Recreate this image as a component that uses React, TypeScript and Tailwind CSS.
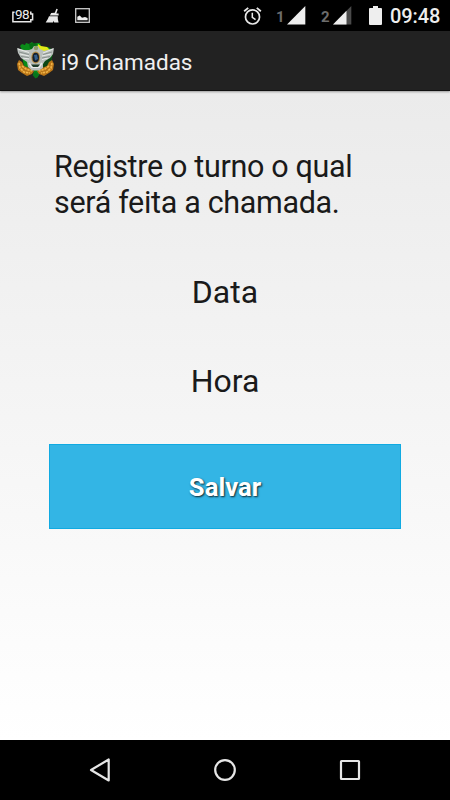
import React from "react";

function Emblem() {
  return (
    <svg width="40" height="38" viewBox="0 0 40 38" className="shrink-0">
      {/* Map */}
      <path
        d="M4 4L6 2L9 3L10 1L13 2L16 0L18 2L21 1L24 1L25 5L32 5L37 8L36 15L34 22L30 27L24 31L21 36L17 33L18 28L8 24L6 15L6 8Z"
        fill="#0a8a18"
      />
      <path d="M22 2L25 4L31 5L34 8L28 12L21 8Z" fill="#e2ea16" />
      <path d="M13 2L17 1L21 2L19 6L14 7Z" fill="#056b14" />
      <path d="M28 18L33 14L36 15L34 22L30 28L26 27Z" fill="#0b4715" />
      {/* Laurels */}
      <path
        d="M3 18L6 20L8 24L13 26L18 29L16 32L11 34L6 31L2 28L1 22Z"
        fill="#b97518"
      />
      <path
        d="M36 18L33 20L31 24L26 26L21 29L23 32L28 34L33 31L37 28L38 22Z"
        fill="#b97518"
      />
      <path
        d="M3 21L4 26L8 30L14 31M6 24L10 27L16 29M36 21L35 26L31 30L25 31M33 24L29 27L23 29"
        fill="none"
        stroke="#f0b548"
        strokeWidth="1.6"
        strokeDasharray="2.4 .8"
      />
      <path d="M16.5 33L19.5 30L23 33L19.5 36.5Z" fill="#07761c" />
      {/* Wings */}
      <path
        d="M1 6L8 8L13 8L16 7L18 4L22 4L24 7L28 9L38 6L37 12L34 16L29 19L27 22L27 26L23 28.5L16 28.5L12 25L11 20L5 16L2 11Z"
        fill="#b9bfbc"
      />
      <path
        d="M2 7L13 10.5M4 12L13 14M7 16L13 17M37 7L27 11M35 12L26 14M32 16L26 17.5"
        fill="none"
        stroke="#e8ebe9"
        strokeWidth="1"
      />
      <path
        d="M3 10L13 12.5M5 14.5L13 15.5M36 10L27 12.5M34 14.5L26 16"
        fill="none"
        stroke="#7e8783"
        strokeWidth=".8"
      />
      <path d="M13 21L16 25L23 25L26 21" fill="none" stroke="#e9ebea" strokeWidth="1.8" />
      <path d="M15 22.5H24L22 25H17Z" fill="#1c3a28" />
      <circle cx="20" cy="6" r="2.2" fill="#8d9b6a" />
      <ellipse cx="19.7" cy="15.5" rx="4.4" ry="6" fill="#b28b45" />
      <ellipse cx="19.7" cy="15.5" rx="3.3" ry="4.8" fill="#141f2c" />
      <path d="M18 13L21 12.5L22 17L19 18.5Z" fill="#33608f" />
    </svg>
  );
}

function NotificationIcons() {
  return (
    <div className="flex items-center">
      <div className="relative h-[15px] w-[22px]">
        <svg width="22" height="15" viewBox="0 0 22 15" className="block">
          <path
            d="M2.6 4.2H.9V13.8H18.8V11.8H20.6V6H18.8V4.2H18"
            fill="none"
            stroke="#e8e8e8"
            strokeWidth="1.5"
          />
        </svg>
        <span className="absolute top-0 left-[3px] text-[13.5px] leading-[13px] tracking-[-0.5px] text-[#eee]">
          98
        </span>
      </div>
      <svg width="16" height="16" viewBox="0 0 16 16" className="ml-[11px]" fill="#e8e8e8">
        <path d="M11.4 .8L12.8 1.2L11.3 5.4H13.6V7.4H4.8L6.2 5L9.8 4.8Z" />
        <path d="M4 8.2H12.8V11L13.6 14.5H9.2L8.8 12.8L8 14.5H.7L2.8 11Z" />
      </svg>
      <svg width="15" height="15" viewBox="0 0 15 15" className="ml-[14px]">
        <rect x=".7" y=".7" width="13.6" height="13.6" fill="none" stroke="#ccc" strokeWidth="1.3" />
        <path d="M2.3 12.3V8.8L4.7 7.4L7 9.8L10 9L12.6 10V12.3Z" fill="#eee" />
      </svg>
    </div>
  );
}

function SystemIcons() {
  return (
    <div className="flex items-center">
      <svg width="19" height="20" viewBox="0 0 20 20" fill="none" stroke="#e8e8e8">
        <circle cx="10" cy="11" r="7.4" strokeWidth="1.8" />
        <path d="M1.2 5L5.5 1.4M14.5 1.4L18.8 5" strokeWidth="1.9" />
        <path d="M9.8 6.7V11.4L13.2 13.7" strokeWidth="1.6" />
      </svg>
      <span className="ml-[14px] w-[11px] pt-[3px] text-[15px] leading-none font-bold text-[#6c6c6c]">
        1
      </span>
      <svg width="19" height="19" viewBox="0 0 19 19">
        <path d="M0 18.5L18.3 0V18.5Z" fill="#eee" />
      </svg>
      <span className="ml-[15px] w-[12px] pt-[3px] text-[15px] leading-none font-bold text-[#6c6c6c]">
        2
      </span>
      <svg width="19" height="19" viewBox="0 0 19 19">
        <path d="M0 18.5L18.3 0V18.5Z" fill="#4a4a4a" />
        <path d="M0 18.5L13.5 4.8V18.5Z" fill="#eee" />
      </svg>
      <svg width="13" height="19" viewBox="0 0 13 19" className="ml-[17px]">
        <path d="M1 2H4V0H9V2H12Q13 2 13 3V18Q13 19 12 19H1Q0 19 0 18V3Q0 2 1 2Z" fill="#eee" />
      </svg>
      <span className="ml-[8px] w-[51px] text-[20px] leading-none font-medium tracking-[-0.1px] text-[#eee]">
        09:48
      </span>
    </div>
  );
}

export default function App() {
  return (
    <div className="flex h-[800px] w-[450px] flex-col overflow-hidden font-['Roboto',sans-serif]">
      {/* Status bar */}
      <div className="flex h-[31px] shrink-0 items-center justify-between bg-black pr-[9px] pl-[12px]">
        <NotificationIcons />
        <SystemIcons />
      </div>

      {/* Action bar */}
      <header className="relative flex h-[60px] shrink-0 items-center border-b border-[#111] bg-[#222] pl-[16px] shadow-[0_1px_2px_rgba(0,0,0,0.35)]">
        <Emblem />
        <h1 className="ml-[5px] pt-[3px] text-[22.5px] leading-none text-[#f0f0f0]">
          i9 Chamadas
        </h1>
      </header>

      {/* Form */}
      <main className="flex flex-1 flex-col bg-linear-to-b from-[#ebebeb] to-white px-[49px] pt-[58px] text-[#1a1a1a]">
        <p className="pl-[5px] text-[30.5px] leading-[36px] tracking-[-0.33px]">
          Registre o turno o qual
          <br />
          será feita a chamada.
        </p>
        <button className="mt-[53px] h-[36px] text-[32px] leading-[36px]">Data</button>
        <button className="mt-[53px] h-[36px] text-[32px] leading-[36px]">Hora</button>
        <button className="mt-[45px] h-[85px] w-[352px] border border-[#10aae2] bg-[#33b5e5] pt-[2px] text-[25.7px] leading-none font-bold text-white [text-shadow:1px_1px_2px_rgba(0,0,0,0.8)]">
          Salvar
        </button>
      </main>

      {/* Navigation bar */}
      <nav className="flex h-[60px] shrink-0 items-center justify-between bg-black px-[88px]">
        <svg width="24" height="24" viewBox="0 0 24 24" fill="none" stroke="#e6e6e6" strokeWidth="2.2">
          <path d="M3 12L20.7 1.5V22.5Z" strokeLinejoin="round" />
        </svg>
        <svg width="24" height="24" viewBox="0 0 24 24" fill="none" stroke="#e6e6e6" strokeWidth="2.2">
          <circle cx="12" cy="12" r="9.8" />
        </svg>
        <svg width="24" height="24" viewBox="0 0 24 24" fill="none" stroke="#e6e6e6" strokeWidth="2.2">
          <rect x="3" y="3" width="18" height="18" rx=".5" />
        </svg>
      </nav>
    </div>
  );
}
